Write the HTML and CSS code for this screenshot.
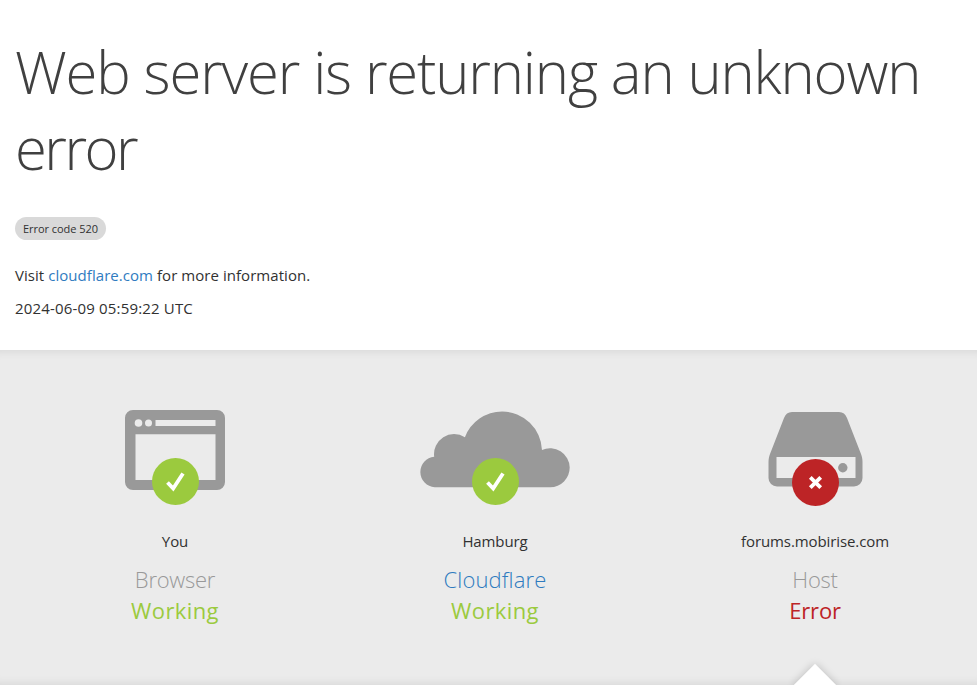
FILE: index.html
```html
<!DOCTYPE html>
<html lang="en">
<head>
<meta charset="utf-8">
<title>Web server is returning an unknown error</title>
<link rel="stylesheet" href="styles.css">
</head>
<body>
<header class="top">
  <h1 class="title">Web server is returning an unknown <span class="tight">error</span></h1>
  <span class="code">Error code 520</span>
  <p class="line visit">Visit <a class="link" href="#">cloudflare.com</a> for more information.</p>
  <p class="line stamp">2024-06-09 05:59:22 UTC</p>
</header>
<section class="panel">
  <div class="cols">
    <div class="col">
      <div class="icon">
        <svg class="art" width="151" height="80" viewBox="0 0 151 80">
          <path class="grey" fill-rule="evenodd" d="M33 0h84a8 8 0 0 1 8 8v64a8 8 0 0 1-8 8H33a8 8 0 0 1-8-8V8a8 8 0 0 1 8-8zM35.500 24.300v45.700h80V24.300zM55.500 10v6h60v-6z"/>
          <circle class="hole" cx="38.500" cy="13" r="3.800"/>
          <circle class="hole" cx="48.500" cy="13" r="3.500"/>
        </svg>
        <svg class="badge" width="47" height="47" viewBox="0 0 47 47">
          <circle class="ok" cx="23.500" cy="23.500" r="23.500"/>
          <path class="mark" d="M15.500 24.500l5.700 6L31 15.500"/>
        </svg>
      </div>
      <div class="place">You</div>
      <div class="kind">Browser</div>
      <div class="state good">Working</div>
    </div>
    <div class="col">
      <div class="icon">
        <svg class="art" width="151" height="80" viewBox="0.8 0 151 80">
          <path class="grey" d="M15.500 77.300A15.300 15.300 0 0 1 15 46.800A20 20 0 0 1 45.700 27.300A40 40 0 0 1 83 1.500A40 40 0 0 1 122.800 40A19.700 19.700 0 0 1 150.500 57.500A19.700 19.700 0 0 1 131 77.300Z"/>
        </svg>
        <svg class="badge" width="47" height="47" viewBox="0 0 47 47">
          <circle class="ok" cx="23.500" cy="23.500" r="23.500"/>
          <path class="mark" d="M15.500 24.500l5.700 6L31 15.500"/>
        </svg>
      </div>
      <div class="place">Hamburg</div>
      <div class="kind blue">Cloudflare</div>
      <div class="state good">Working</div>
    </div>
    <div class="col">
      <div class="icon">
        <svg class="art" width="151" height="80" viewBox="0 0 151 80">
          <path class="grey" fill-rule="evenodd" d="M52 2h47c4 0 6.500 2 8 6l14 36c1 3 1.500 5 1.500 8v16a8.500 8.500 0 0 1-8.500 8.500H37a8.500 8.500 0 0 1-8.500-8.500V52c0-3 .5-5 1.500-8L44 8c1.500-4 4-6 8-6zM36.500 47v21h79V47z"/>
          <circle class="grey" cx="102.800" cy="57.700" r="4.700"/>
        </svg>
        <svg class="badge badge-low" width="47" height="47" viewBox="0 0 47 47">
          <circle class="bad" cx="23.500" cy="23.500" r="23.500"/>
          <path class="mark" d="M18.300 18.300l10.400 10.400M28.700 18.300L18.300 28.700"/>
        </svg>
      </div>
      <div class="place">forums.mobirise.com</div>
      <div class="kind">Host</div>
      <div class="state fail">Error</div>
    </div>
  </div>
  <div class="notch"></div>
</section>
</body>
</html>
```
FILE: styles.css
```css
* { box-sizing: border-box; }
html, body { margin: 0; padding: 0; background: #fff; }
body { font-family: "Open Sans", "Noto Sans", sans-serif; color: #404040; height: 694px; overflow: hidden; }
.top { height: 350px; padding: 34px 15px 0; }
.title { margin: 0; font-size: 58px; font-weight: 300; line-height: 76px; color: #404040; letter-spacing: -1.15px; }
.tight { letter-spacing: -2.5px; }
.code { display: inline-block; margin-top: 31px; height: 23px; line-height: 23px; padding: 0 8px; border-radius: 12px; background: #d9d9d9; font-size: 11px; letter-spacing: -.05px; color: #313131; }
.line { margin: 0; font-size: 15px; line-height: 22px; color: #313131; }
.visit { margin-top: 24px; letter-spacing: .05px; }
.stamp { margin-top: 11px; letter-spacing: .17px; }
.link { color: #2f7bbf; text-decoration: none; }
.panel { position: relative; height: 335px; background: #ebebeb; box-shadow: inset 0 10px 8px -8px rgba(0,0,0,.08), inset 0 -10px 8px -8px rgba(0,0,0,.08); overflow: hidden; padding: 60px 0 0 15px; }
.cols { display: grid; grid-template-columns: repeat(3, 320px); }
.col { display: flex; flex-direction: column; align-items: center; }
.icon { position: relative; width: 151px; height: 95px; }
.art { display: block; overflow: visible; }
.badge { position: absolute; left: 52px; top: 48px; }
.badge-low { top: 49px; }
.grey { fill: #999; }
.hole { fill: #ebebeb; }
.ok { fill: #9bca3e; }
.bad { fill: #bd2426; }
.mark { fill: none; stroke: #fff; stroke-width: 3.8; }
.place { margin-top: 25px; font-size: 15px; line-height: 22px; color: #313131; letter-spacing: -.1px; }
.kind { margin-top: 12px; font-size: 22px; font-weight: 300; line-height: 30px; color: #999; letter-spacing: -.25px; }
.kind.blue { color: #2f7bbf; letter-spacing: .15px; }
.state { margin-top: 1px; font-size: 22px; line-height: 31px; font-weight: 400; letter-spacing: .4px; }
.good { color: #9bca3e; }
.state.fail { color: #bd2426; letter-spacing: -.2px; }
.notch { position: absolute; left: 800px; top: 320px; width: 30px; height: 30px; background: #fff; transform: rotate(45deg); box-shadow: 0 0 8px rgba(0,0,0,.2); }
```
